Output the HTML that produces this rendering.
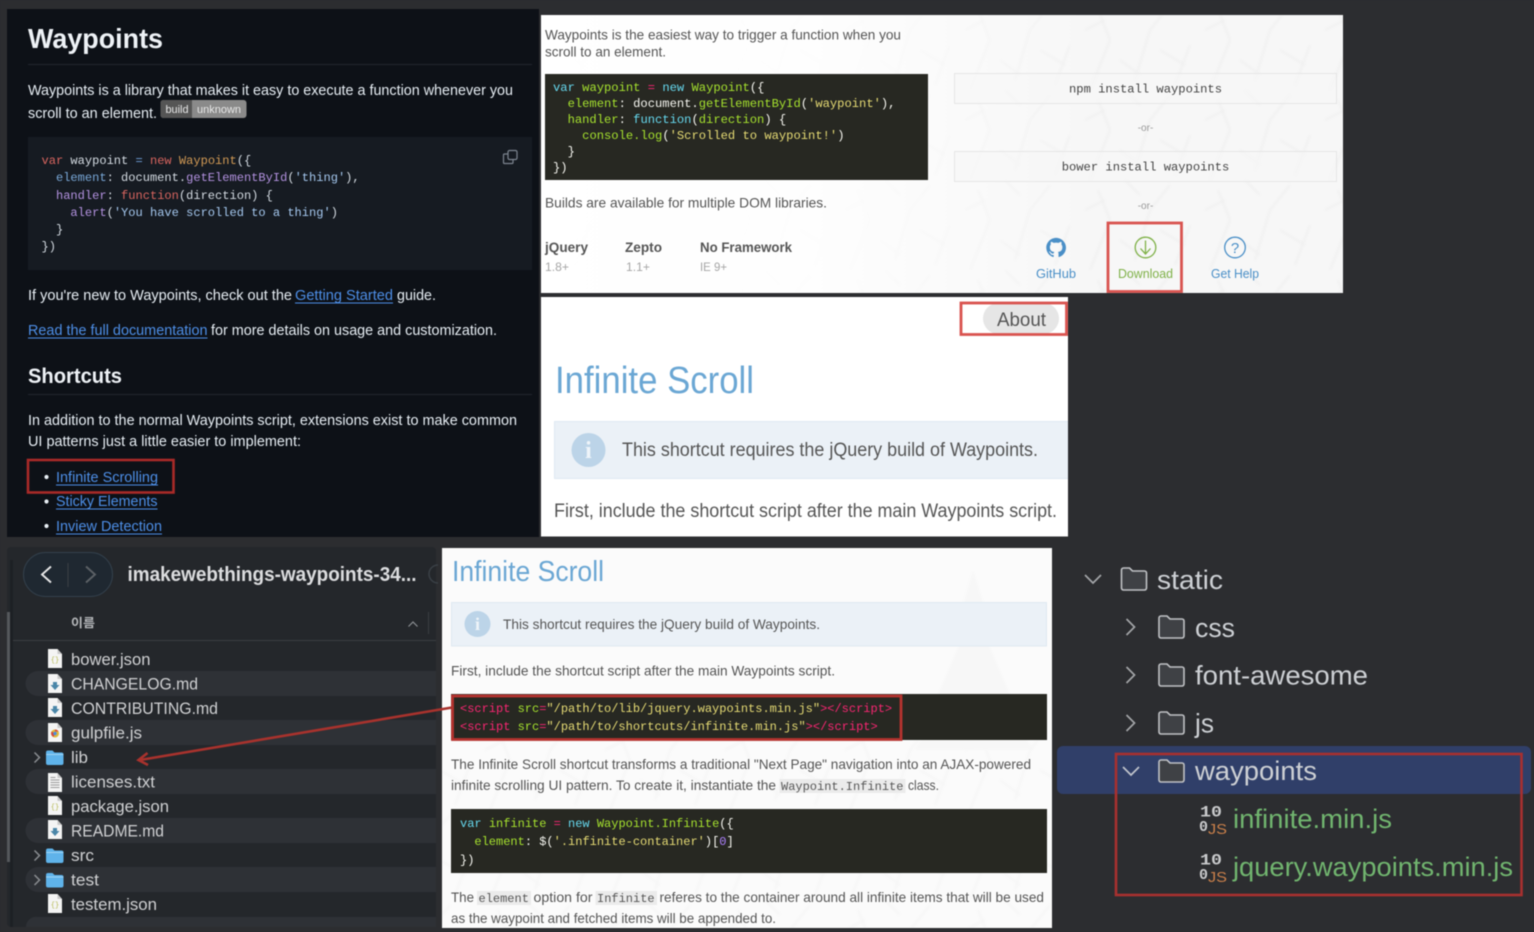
<!DOCTYPE html>
<html><head><meta charset="utf-8"><title>Waypoints</title>
<style>
html,body{margin:0;padding:0;background:#2c2d30;width:1534px;height:932px;overflow:hidden}
svg{display:block;position:absolute;left:0;top:0;filter:blur(.45px)}
text{font-family:"Liberation Sans","Noto Sans CJK KR",sans-serif;white-space:pre}
.m{font-family:"Liberation Mono",monospace}
.g{fill:#e6edf3;font-size:14.5px}
.l{fill:#4d8ee6;font-size:14.5px}
.d{fill:#555;font-size:14px}
.f{fill:#cfd0d2;font-size:17px}
.t{fill:#cdd0d4;font-size:27px}
.j{font-size:27px;fill:#71b56f}
</style></head><body>
<svg width="1534" height="932" viewBox="0 0 1534 932" xmlns="http://www.w3.org/2000/svg">
<defs>
<filter id="soft" x="0" y="0" width="100%" height="100%"><feGaussianBlur stdDeviation="1.2"/></filter>
<pattern id="tex" width="120" height="90" patternUnits="userSpaceOnUse">
<path d="M10 90L30 40M30 40L18 10M55 80L70 30M70 30L90 5M95 85L110 45M40 60L60 75M80 50L105 65M5 30L25 20M60 15L45 0" stroke="#f0f0f0" stroke-width="2" fill="none"/>
</pattern>
<linearGradient id="fade" x1="0" x2="1" y1="0" y2="0"><stop offset="0" stop-color="#fff"/><stop offset=".5" stop-color="#fff" stop-opacity=".85"/><stop offset="1" stop-color="#fff" stop-opacity="0"/></linearGradient>
<g id="file"><path d="M0 0h9.500l4.500 5v14H0z" fill="#f4f4f4"/><path d="M9.500 0v5H14z" fill="#c9c9c9"/></g>
<g id="json"><use href="#file"/><text x="7" y="13" font-size="7" fill="#b4b84e" text-anchor="middle" class="m">{}</text></g>
<g id="md"><use href="#file"/><path d="M5 8h4v3h2.500L7 16 2.500 11H5z" fill="#4a86a8"/></g>
<g id="fold"><path d="M0 2.500a2 2 0 0 1 2-2h4.500l2 2H15.500a2 2 0 0 1 2 2V13a2 2 0 0 1-2 2H2a2 2 0 0 1-2-2z" fill="#5fb3ea"/><path d="M0 4.500h17.500" stroke="#9ed3f5" stroke-width="1"/></g>
<g id="ifold"><path d="M1 3a2 2 0 0 1 2-2h6l3 3h12a2 2 0 0 1 2 2v15a2 2 0 0 1-2 2H3a2 2 0 0 1-2-2z" fill="#3f4145" stroke="#c0c2c5" stroke-width="1.600"/></g>
</defs>

<rect width="1534" height="932" fill="#2c2d30"/>

<!-- GitHub README panel -->
<rect x="7" y="9" width="532" height="528" fill="#0d1117"/>
<text x="28" y="48" font-size="28" font-weight="700" fill="#eef2f6" textLength="135" lengthAdjust="spacingAndGlyphs">Waypoints</text>
<rect x="28" y="64" width="504" height="1" fill="#21262d"/>
<text x="28" y="95" class="g" textLength="485" lengthAdjust="spacingAndGlyphs">Waypoints is a library that makes it easy to execute a function whenever you</text>
<text x="28" y="118" class="g" textLength="129" lengthAdjust="spacingAndGlyphs">scroll to an element.</text>
<rect x="160.500" y="100" width="86" height="18" rx="3" fill="#8a8a8a"/>
<path d="M163.500 100H192v18h-28.500a3 3 0 0 1-3-3v-12a3 3 0 0 1 3-3z" fill="#555"/>
<text x="165.500" y="113" font-size="11" fill="#e8e8e8" textLength="23" lengthAdjust="spacingAndGlyphs">build</text>
<text x="197" y="113" font-size="11" fill="#e8e8e8" textLength="44" lengthAdjust="spacingAndGlyphs">unknown</text>
<rect x="28" y="137" width="504" height="133" fill="#161b22"/>
<g class="m" font-size="12.050" fill="#d5dce3">
<text class="m" x="41.500" y="164"><tspan fill="#d9655f">var</tspan> waypoint <tspan fill="#6f9fd8">=</tspan> <tspan fill="#d9655f">new</tspan> <tspan fill="#d29a55">Waypoint</tspan>({</text>
<text class="m" x="41.500" y="181">  <tspan fill="#79a8d8">element</tspan>: document.<tspan fill="#b392e0">getElementById</tspan>(<tspan fill="#a5c8ef">'thing'</tspan>),</text>
<text class="m" x="41.500" y="199">  <tspan fill="#b392e0">handler</tspan>: <tspan fill="#d9655f">function</tspan>(direction) {</text>
<text class="m" x="41.500" y="216">    <tspan fill="#b392e0">alert</tspan>(<tspan fill="#a5c8ef">'You have scrolled to a thing'</tspan>)</text>
<text class="m" x="41.500" y="233">  }</text>
<text class="m" x="41.500" y="250">})</text>
</g>
<g fill="none" stroke="#7d8590" stroke-width="1.200"><rect x="508" y="150.500" width="9" height="9" rx="1.500"/><path d="M508 154h-3.500a1 1 0 0 0-1 1v7.500a1 1 0 0 0 1 1h7.500a1 1 0 0 0 1-1V160"/></g>
<text x="28" y="300" class="g" textLength="264" lengthAdjust="spacingAndGlyphs">If you're new to Waypoints, check out the</text>
<text x="295" y="300" class="l" textLength="98" lengthAdjust="spacingAndGlyphs">Getting Started</text>
<rect x="295" y="302.500" width="98" height="1" fill="#4d8ee6"/>
<text x="397" y="300" class="g" textLength="39" lengthAdjust="spacingAndGlyphs">guide.</text>
<text x="28" y="335" class="l" textLength="179.500" lengthAdjust="spacingAndGlyphs">Read the full documentation</text>
<rect x="28" y="337.500" width="179.500" height="1" fill="#4d8ee6"/>
<text x="211" y="335" class="g" textLength="286" lengthAdjust="spacingAndGlyphs">for more details on usage and customization.</text>
<text x="28" y="383" font-size="21" font-weight="700" fill="#eef2f6" textLength="94" lengthAdjust="spacingAndGlyphs">Shortcuts</text>
<rect x="28" y="394" width="504" height="1" fill="#21262d"/>
<text x="28" y="425" class="g" textLength="489" lengthAdjust="spacingAndGlyphs">In addition to the normal Waypoints script, extensions exist to make common</text>
<text x="28" y="446" class="g" textLength="273" lengthAdjust="spacingAndGlyphs">UI patterns just a little easier to implement:</text>
<circle cx="46.500" cy="477" r="2.100" fill="#e6edf3"/><circle cx="46.500" cy="501.500" r="2.100" fill="#e6edf3"/><circle cx="46.500" cy="526" r="2.100" fill="#e6edf3"/>
<text x="56" y="482" class="l" textLength="102" lengthAdjust="spacingAndGlyphs">Infinite Scrolling</text><rect x="56" y="484.500" width="102" height="1" fill="#4d8ee6"/>
<text x="56" y="506" class="l" textLength="101.500" lengthAdjust="spacingAndGlyphs">Sticky Elements</text><rect x="56" y="508.500" width="101.500" height="1" fill="#4d8ee6"/>
<text x="56" y="531" class="l" textLength="106" lengthAdjust="spacingAndGlyphs">Inview Detection</text><rect x="56" y="533.500" width="106" height="1" fill="#4d8ee6"/>
<rect x="28" y="460" width="145.500" height="32.500" fill="none" stroke="#a82a28" stroke-width="2.600"/>

<!-- Top right panel -->
<rect x="541" y="15" width="802" height="278" fill="#f7f7f7"/>
<rect x="541" y="15" width="802" height="278" fill="url(#tex)" filter="url(#soft)"/>
<rect x="541" y="15" width="560" height="278" fill="url(#fade)"/>
<text x="545" y="39.500" class="d" textLength="356" lengthAdjust="spacingAndGlyphs">Waypoints is the easiest way to trigger a function when you</text>
<text x="545" y="56.500" class="d" textLength="121" lengthAdjust="spacingAndGlyphs">scroll to an element.</text>
<rect x="545" y="74" width="383" height="106" fill="#272822"/>
<g font-size="12.150">
<text class="m" font-size="12.150" x="553" y="91" fill="#f8f8f2"><tspan fill="#66d9ef">var</tspan> <tspan fill="#a6e22e">waypoint</tspan> <tspan fill="#f92672">=</tspan> <tspan fill="#66d9ef">new</tspan> <tspan fill="#a6e22e">Waypoint</tspan>({</text>
<text class="m" font-size="12.150" x="553" y="107" fill="#f8f8f2">  <tspan fill="#a6e22e">element</tspan>: document.<tspan fill="#a6e22e">getElementById</tspan>(<tspan fill="#e6db74">'waypoint'</tspan>),</text>
<text class="m" font-size="12.150" x="553" y="123" fill="#f8f8f2">  <tspan fill="#a6e22e">handler</tspan>: <tspan fill="#66d9ef">function</tspan>(<tspan fill="#a6e22e">direction</tspan>) {</text>
<text class="m" font-size="12.150" x="553" y="139" fill="#f8f8f2">    <tspan fill="#a6e22e">console.log</tspan>(<tspan fill="#e6db74">'Scrolled to waypoint!'</tspan>)</text>
<text class="m" font-size="12.150" x="553" y="155" fill="#f8f8f2">  }</text>
<text class="m" font-size="12.150" x="553" y="171" fill="#f8f8f2">})</text>
</g>
<rect x="954.500" y="73.500" width="382" height="30" fill="#f6f6f6" fill-opacity=".6" stroke="#e6e6e6"/>
<text class="m" x="1145.500" y="92.500" font-size="12.150" fill="#444" text-anchor="middle">npm install waypoints</text>
<text x="1145.500" y="131" font-size="10" fill="#999" text-anchor="middle">-or-</text>
<rect x="954.500" y="151.500" width="382" height="30" fill="#f6f6f6" fill-opacity=".6" stroke="#e6e6e6"/>
<text class="m" x="1145.500" y="170.500" font-size="12.150" fill="#444" text-anchor="middle">bower install waypoints</text>
<text x="1145.500" y="209" font-size="10" fill="#999" text-anchor="middle">-or-</text>
<text x="545" y="207.500" class="d" textLength="282" lengthAdjust="spacingAndGlyphs">Builds are available for multiple DOM libraries.</text>
<g font-weight="700" font-size="14" fill="#555">
<text x="545" y="252" textLength="43" lengthAdjust="spacingAndGlyphs">jQuery</text>
<text x="625" y="252" textLength="37" lengthAdjust="spacingAndGlyphs">Zepto</text>
<text x="700" y="252" textLength="92" lengthAdjust="spacingAndGlyphs">No Framework</text>
</g>
<g font-size="12" fill="#a5a5a5">
<text x="545" y="271" textLength="24" lengthAdjust="spacingAndGlyphs">1.8+</text>
<text x="626" y="271" textLength="24" lengthAdjust="spacingAndGlyphs">1.1+</text>
<text x="700" y="271" textLength="27" lengthAdjust="spacingAndGlyphs">IE 9+</text>
</g>
<path transform="translate(1046.300,237.600) scale(.82)" fill="#4a8fc7" d="M12 .297c-6.630 0-12 5.373-12 12 0 5.303 3.438 9.800 8.205 11.385.6.113.82-.258.82-.577 0-.285-.01-1.040-.015-2.040-3.338.724-4.042-1.610-4.042-1.610C4.422 18.070 3.633 17.700 3.633 17.700c-1.087-.744.084-.729.084-.729 1.205.084 1.838 1.236 1.838 1.236 1.070 1.835 2.809 1.305 3.495.998.108-.776.417-1.305.76-1.605-2.665-.3-5.466-1.332-5.466-5.930 0-1.310.465-2.380 1.235-3.220-.135-.303-.54-1.523.105-3.176 0 0 1.005-.322 3.300 1.230.96-.267 1.980-.399 3-.405 1.020.006 2.040.138 3 .405 2.280-1.552 3.285-1.230 3.285-1.230.645 1.653.24 2.873.12 3.176.765.84 1.230 1.910 1.230 3.220 0 4.610-2.805 5.625-5.475 5.920.42.36.81 1.096.81 2.220 0 1.606-.015 2.896-.015 3.286 0 .315.21.69.825.57C20.565 22.092 24 17.592 24 12.297c0-6.627-5.373-12-12-12"/>
<text x="1036" y="278" font-size="12.500" fill="#4a8fc7" textLength="40" lengthAdjust="spacingAndGlyphs">GitHub</text>
<circle cx="1145.500" cy="247.500" r="10.300" fill="none" stroke="#7fb148" stroke-width="1.300"/>
<path d="M1145.500 240.500v13M1140.500 248.500l5 5.500 5-5.500" fill="none" stroke="#7fb148" stroke-width="1.300"/>
<text x="1118" y="278" font-size="12.500" fill="#7fb148" textLength="55" lengthAdjust="spacingAndGlyphs">Download</text>
<circle cx="1235" cy="247.500" r="10.300" fill="none" stroke="#4a8fc7" stroke-width="1.300"/>
<text x="1235" y="253" font-size="15" fill="#4a8fc7" text-anchor="middle">?</text>
<text x="1211" y="278" font-size="12.500" fill="#4a8fc7" textLength="48" lengthAdjust="spacingAndGlyphs">Get Help</text>
<rect x="1108" y="223" width="73.500" height="68.500" fill="none" stroke="#d9534f" stroke-width="2.800"/>

<!-- About panel -->
<rect x="541" y="297" width="527" height="239.500" fill="#fff"/>
<rect x="983" y="303" width="76" height="31" rx="15.500" fill="#e6e6e6"/>
<text x="997" y="326" font-size="19" fill="#555" textLength="49" lengthAdjust="spacingAndGlyphs">About</text>
<rect x="961" y="303" width="105.500" height="31.500" fill="none" stroke="#d9534f" stroke-width="2.800"/>
<text x="555" y="393" font-size="38" fill="#6ba7d4" textLength="199" lengthAdjust="spacingAndGlyphs">Infinite Scroll</text>
<rect x="554" y="421" width="514" height="58" fill="#ebf1f7"/>
<path d="M1068 421.500H554.500v57H1068" fill="none" stroke="#dfe9f2"/>
<circle cx="588.500" cy="450" r="17" fill="#bcd4e8"/>
<text x="588.500" y="458" font-size="24" font-weight="700" fill="#eef4f9" text-anchor="middle" style="font-family:'Liberation Serif',serif">i</text>
<text x="622" y="456" font-size="19" fill="#555" textLength="416" lengthAdjust="spacingAndGlyphs">This shortcut requires the jQuery build of Waypoints.</text>
<text x="554" y="517" font-size="19" fill="#555" textLength="503" lengthAdjust="spacingAndGlyphs">First, include the shortcut script after the main Waypoints script.</text>

<!-- Finder panel -->
<rect x="7" y="547" width="429" height="380" rx="4" fill="#24272b"/>
<rect x="7" y="612" width="3" height="250" fill="#55585c"/>
<rect x="10" y="560" width="3" height="367" fill="#1d2024"/>
<rect x="23.500" y="552.500" width="89" height="44" rx="22" fill="#1f2831" stroke="#33404c"/>
<path d="M51 566.500L42 574.500l9 8" fill="none" stroke="#e8e8e8" stroke-width="1.900"/>
<path d="M86 566.500L95 574.500l-9 8" fill="none" stroke="#5c6166" stroke-width="1.900"/>
<rect x="67.500" y="563" width="1" height="24" fill="#3a4046"/>
<text x="127.500" y="581" font-size="20" font-weight="700" fill="#dcdddf" textLength="289" lengthAdjust="spacingAndGlyphs">imakewebthings-waypoints-34...</text>
<path d="M438 565a9 9 0 0 0 0 18" fill="none" stroke="#3a4046" stroke-width="1.500"/>
<text x="71" y="627" font-size="12" font-weight="700" fill="#b5b7ba" textLength="24" lengthAdjust="spacingAndGlyphs">이름</text>
<path d="M408.500 626.500l4.500-4.500 4.500 4.500" fill="none" stroke="#8b8e92" stroke-width="1.200"/>
<rect x="428" y="612" width="1" height="22" fill="#3a3e42"/>
<rect x="13" y="640" width="423" height="1" fill="#3a3e42"/>
<g fill="#2e3136">
<path d="M436 671H38a12.500 12.500 0 0 0 0 25H436z"/>
<path d="M436 720H38a12.500 12.500 0 0 0 0 25H436z"/>
<path d="M436 769H38a12.500 12.500 0 0 0 0 25H436z"/>
<path d="M436 818H38a12.500 12.500 0 0 0 0 25H436z"/>
<path d="M436 867H38a12.500 12.500 0 0 0 0 25H436z"/>
<path d="M436 917H38a10 10 0 0 0-12 10H436z"/>
</g>
<use href="#json" x="48" y="649"/>
<use href="#md" x="48" y="674"/>
<use href="#md" x="48" y="698"/>
<use href="#file" x="48" y="723"/>
<circle cx="55" cy="733.500" r="4" fill="#e0b93a"/><path d="M55 729.500a4 4 0 0 1 3.500 2H55zM51.500 731.500a4 4 0 0 0 2 5.500l1.500-3.500z" fill="#d6483c"/><circle cx="55" cy="733.500" r="1.700" fill="#4a8fe0"/>
<use href="#fold" x="46" y="750"/>
<use href="#file" x="48" y="773"/>
<path d="M50.500 780h9M50.500 782.500h9M50.500 785h9M50.500 787.500h9M50.500 777.500h5" stroke="#9a9a9a" stroke-width="1"/>
<use href="#json" x="48" y="796"/>
<use href="#md" x="48" y="820"/>
<use href="#fold" x="46" y="848"/>
<use href="#fold" x="46" y="872.500"/>
<use href="#json" x="48" y="894"/>
<g fill="none" stroke="#8a8d91" stroke-width="1.500">
<path d="M34.500 752.500l5 5-5 5"/><path d="M34.500 850.500l5 5-5 5"/><path d="M34.500 875l5 5-5 5"/>
</g>
<text x="71" y="665" class="f" textLength="79.500" lengthAdjust="spacingAndGlyphs">bower.json</text>
<text x="71" y="689.500" class="f" textLength="127" lengthAdjust="spacingAndGlyphs">CHANGELOG.md</text>
<text x="71" y="714" class="f" textLength="147" lengthAdjust="spacingAndGlyphs">CONTRIBUTING.md</text>
<text x="71" y="738.500" class="f" textLength="71" lengthAdjust="spacingAndGlyphs">gulpfile.js</text>
<text x="71" y="763" class="f" textLength="17" lengthAdjust="spacingAndGlyphs">lib</text>
<text x="71" y="787.500" class="f" textLength="84" lengthAdjust="spacingAndGlyphs">licenses.txt</text>
<text x="71" y="812" class="f" textLength="98" lengthAdjust="spacingAndGlyphs">package.json</text>
<text x="71" y="836.500" class="f" textLength="93" lengthAdjust="spacingAndGlyphs">README.md</text>
<text x="71" y="861" class="f" textLength="23" lengthAdjust="spacingAndGlyphs">src</text>
<text x="71" y="885.500" class="f" textLength="28" lengthAdjust="spacingAndGlyphs">test</text>
<text x="71" y="910" class="f" textLength="86" lengthAdjust="spacingAndGlyphs">testem.json</text>

<!-- Doc panel -->
<rect x="442" y="548" width="610" height="380" fill="#fbfbfb"/>
<rect x="442" y="740" width="610" height="188" fill="url(#tex)" opacity=".5" filter="url(#soft)"/>
<path d="M973 570l-20 70 10-4-30 70 16-6-35 50h120l-35-50 16 6-30-70 10 4z" fill="#f7f7f7" filter="url(#soft)"/>
<text x="452" y="581" font-size="29" fill="#6ba7d4" textLength="152" lengthAdjust="spacingAndGlyphs">Infinite Scroll</text>
<rect x="451.500" y="602.500" width="595" height="43.500" fill="#ebf1f7" stroke="#dfe9f2"/>
<circle cx="477.500" cy="624" r="13" fill="#bcd4e8"/>
<text x="477.500" y="630" font-size="18" font-weight="700" fill="#eef4f9" text-anchor="middle" style="font-family:'Liberation Serif',serif">i</text>
<text x="503" y="629" class="d" textLength="317" lengthAdjust="spacingAndGlyphs">This shortcut requires the jQuery build of Waypoints.</text>
<text x="451" y="675.500" class="d" textLength="384" lengthAdjust="spacingAndGlyphs">First, include the shortcut script after the main Waypoints script.</text>
<rect x="451" y="694" width="596" height="46" fill="#272822"/>
<text class="m" font-size="12" x="460" y="712" fill="#f92672">&lt;script <tspan fill="#a6e22e">src</tspan>=<tspan fill="#e6db74">"/path/to/lib/jquery.waypoints.min.js"</tspan>&gt;&lt;/script&gt;</text>
<text class="m" font-size="12" x="460" y="730" fill="#f92672">&lt;script <tspan fill="#a6e22e">src</tspan>=<tspan fill="#e6db74">"/path/to/shortcuts/infinite.min.js"</tspan>&gt;&lt;/script&gt;</text>
<rect x="452.500" y="696" width="448.500" height="43.500" fill="none" stroke="#b5322f" stroke-width="2.800"/>
<text x="451" y="769" class="d" textLength="580" lengthAdjust="spacingAndGlyphs">The Infinite Scroll shortcut transforms a traditional "Next Page" navigation into an AJAX-powered</text>
<text x="451" y="790" class="d" textLength="325" lengthAdjust="spacingAndGlyphs">infinite scrolling UI pattern. To create it, instantiate the</text>
<rect x="779.500" y="779" width="126" height="14" fill="#ebebeb"/>
<text class="m" x="781" y="790" font-size="12" fill="#555">Waypoint.Infinite</text>
<text x="908" y="790" class="d" textLength="31" lengthAdjust="spacingAndGlyphs">class.</text>
<rect x="451" y="809" width="596" height="64" fill="#272822"/>
<text class="m" font-size="12" x="460" y="827" fill="#f8f8f2"><tspan fill="#66d9ef">var</tspan> <tspan fill="#a6e22e">infinite</tspan> <tspan fill="#f92672">=</tspan> <tspan fill="#66d9ef">new</tspan> <tspan fill="#a6e22e">Waypoint.Infinite</tspan>({</text>
<text class="m" font-size="12" x="460" y="845" fill="#f8f8f2">  <tspan fill="#a6e22e">element</tspan>: $(<tspan fill="#e6db74">'.infinite-container'</tspan>)[<tspan fill="#ae81ff">0</tspan>]</text>
<text class="m" font-size="12" x="460" y="863.500" fill="#f8f8f2">})</text>
<text x="451" y="902" class="d" textLength="23" lengthAdjust="spacingAndGlyphs">The</text>
<rect x="477" y="891" width="54" height="14" fill="#ebebeb"/>
<text class="m" x="478.500" y="902" font-size="12" fill="#555">element</text>
<text x="533.500" y="902" class="d" textLength="59" lengthAdjust="spacingAndGlyphs">option for</text>
<rect x="595.500" y="891" width="61.500" height="14" fill="#ebebeb"/>
<text class="m" x="597" y="902" font-size="12" fill="#555">Infinite</text>
<text x="659.500" y="902" class="d" textLength="384.500" lengthAdjust="spacingAndGlyphs">referes to the container around all infinite items that will be used</text>
<text x="451" y="923" class="d" textLength="325" lengthAdjust="spacingAndGlyphs">as the waypoint and fetched items will be appended to.</text>

<!-- Arrow -->
<path d="M452 707.500L140 760" fill="none" stroke="#a8322d" stroke-width="2.600"/>
<path d="M147.500 753L138.500 760l9.500 5" fill="none" stroke="#a8322d" stroke-width="2.600"/>

<!-- Tree -->
<rect x="1057" y="746" width="474" height="48" rx="6" fill="#303f69"/>
<g fill="none" stroke="#a3a5a8" stroke-width="1.700">
<path d="M1085 575l8 8 8-8"/><path d="M1126.500 619l8 8-8 8"/><path d="M1126.500 667l8 8-8 8"/><path d="M1126.500 715l8 8-8 8"/>
</g>
<path d="M1123 767l8 8 8-8" fill="none" stroke="#c0c4cc" stroke-width="1.700"/>
<use href="#ifold" x="1120.500" y="567"/>
<use href="#ifold" x="1158" y="615"/>
<use href="#ifold" x="1158" y="663"/>
<use href="#ifold" x="1158" y="711"/>
<use href="#ifold" x="1158" y="759"/>
<text x="1157" y="589" class="t" textLength="66" lengthAdjust="spacingAndGlyphs">static</text>
<text x="1195" y="637" class="t" textLength="40" lengthAdjust="spacingAndGlyphs">css</text>
<text x="1195" y="684.500" class="t" textLength="173" lengthAdjust="spacingAndGlyphs">font-awesome</text>
<text x="1195" y="732.500" class="t" textLength="19" lengthAdjust="spacingAndGlyphs">js</text>
<text x="1195" y="780" class="t" textLength="122" lengthAdjust="spacingAndGlyphs">waypoints</text>
<g>
<text class="m" x="1200" y="816.500" font-size="16" font-weight="700" fill="#c9cacc" textLength="22" lengthAdjust="spacingAndGlyphs">10</text>
<text class="m" x="1199" y="831" font-size="15" font-weight="700" fill="#c9cacc">0</text>
<text x="1208" y="834" font-size="15" fill="#c97f4a" textLength="19" lengthAdjust="spacingAndGlyphs">JS</text>
<text class="m" x="1200" y="864.500" font-size="16" font-weight="700" fill="#c9cacc" textLength="22" lengthAdjust="spacingAndGlyphs">10</text>
<text class="m" x="1199" y="879" font-size="15" font-weight="700" fill="#c9cacc">0</text>
<text x="1208" y="882" font-size="15" fill="#c97f4a" textLength="19" lengthAdjust="spacingAndGlyphs">JS</text>
</g>
<text x="1233" y="828" class="j" textLength="159" lengthAdjust="spacingAndGlyphs">infinite.min.js</text>
<text x="1233" y="876" class="j" textLength="280" lengthAdjust="spacingAndGlyphs">jquery.waypoints.min.js</text>
<rect x="1116" y="754" width="405.500" height="141" fill="none" stroke="#a8302f" stroke-width="2.600"/>
</svg>
</body></html>
